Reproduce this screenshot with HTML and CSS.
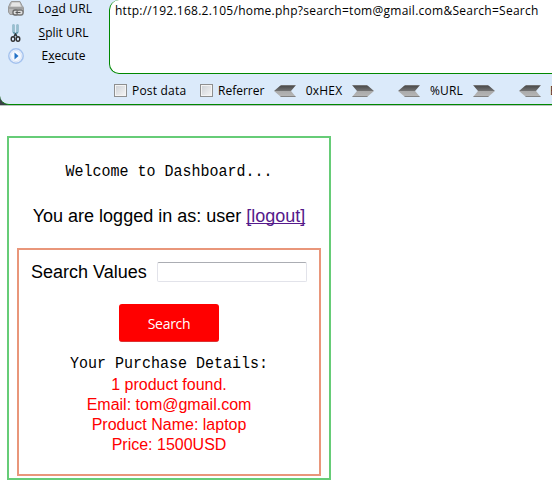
FILE: index.html
```html
<!DOCTYPE html>
<html lang="en">
<head>
<meta charset="utf-8">
<title>Dashboard</title>
<link rel="stylesheet" href="styles.css">
</head>
<body>
<svg width="0" height="0" class="defs">
  <defs>
    <linearGradient id="metal" x1="0" y1="0" x2="0" y2="1">
      <stop offset="0" stop-color="#858585"/><stop offset=".12" stop-color="#505050"/>
      <stop offset=".5" stop-color="#747474"/><stop offset=".52" stop-color="#aaa"/>
      <stop offset=".88" stop-color="#b4b4b4"/><stop offset="1" stop-color="#666"/>
    </linearGradient>
    <symbol id="left" viewBox="0 0 22 12"><path d="M0 6 7 0H22L17 6l5 6H7Z" fill="url(#metal)"/></symbol>
    <symbol id="right" viewBox="0 0 22 12"><path d="M22 6 15 0H0L5 6l-5 6h15Z" fill="url(#metal)"/></symbol>
  </defs>
</svg>
<div class="frame">
<header class="toolbar">
  <nav class="actions">
    <div class="action">
      <svg width="16" height="16" viewBox="0 0 16 16"><path d="M2.500 1.500Q3 .5 4 .5h8l2 4 1.500 2v5l-1.500 2H2L.5 11V6Z" fill="#b8b8b8" stroke="#999"/><path d="M4 1.500h7.500l1.500 4H2.500Z" fill="#e6e6e6"/><path d="M1 7h14" stroke="#888"/><rect x="5" y="9" width="5.500" height="5" rx="2" fill="#ddd" stroke="#666" stroke-width="1.300"/><rect x="9" y="9" width="6" height="5" rx="2" fill="#ddd" stroke="#777" stroke-width="1.300"/><path d="M7.500 11.500h5" stroke="#555"/></svg>
      <span class="load">Lo<u>a</u>d URL</span>
    </div>
    <div class="action">
      <svg width="16" height="19" viewBox="0 0 16 19"><path d="M5.500.5v7.500l3 4M9.500 .5v7.500l-3 4" fill="none" stroke="#6397aa" stroke-width="2"/><path d="M5.500 1v7M9.500 1v7" stroke="#a5cbd8" stroke-width=".8"/><ellipse cx="5" cy="15" rx="1.800" ry="2.300" fill="none" stroke="#333" stroke-width="1.400"/><ellipse cx="10" cy="15" rx="1.800" ry="2.300" fill="none" stroke="#333" stroke-width="1.400"/><path d="m6 12.500 1.500-2.500 1.500 2.500" fill="none" stroke="#333" stroke-width="1.400"/></svg>
      <span class="split"><u>S</u>plit URL</span>
    </div>
    <div class="action">
      <svg width="16" height="16" viewBox="0 0 16 16"><circle cx="8" cy="8" r="7.200" fill="#f4f8ff" stroke="#a4c2ee" stroke-width="1.500"/><circle cx="8" cy="8" r="5.500" fill="none" stroke="#d8e4f5"/><path d="M6.500 4.500v7L10.500 8Z" fill="#2371c6"/></svg>
      <span class="exec">E<u>x</u>ecute</span>
    </div>
  </nav>
  <div class="request">
    <div class="url"><span>http://192.168.2.105/home.php?search=tom@gmail.com&amp;Search=Search</span></div>
    <div class="options">
      <i class="check"></i><span class="post">Post data</span>
      <i class="check"></i><span class="ref">Referrer</span>
      <svg class="arrow"><use href="#left"/></svg><span class="hex">0xHEX</span><svg class="arrow"><use href="#right"/></svg>
      <svg class="arrow gap"><use href="#left"/></svg><span class="pct">%URL</span><svg class="arrow"><use href="#right"/></svg>
      <svg class="arrow gap"><use href="#left"/></svg><span class="more">B</span>
    </div>
  </div>
</header>
</div>
<main class="dashboard">
  <h1 class="mono">Welcome to Dashboard...</h1>
  <p class="login"><span>You are logged in as: user <a href="#">[logout]</a></span></p>
  <section class="search">
    <div class="field"><label for="q">Search Values</label><input id="q" type="text"></div>
    <button type="button">Search</button>
    <h2 class="mono">Your Purchase Details:</h2>
    <div class="result">1 product found.<br>Email: tom@gmail.com<br>Product Name: laptop<br>Price: 1500USD</div>
  </section>
</main>
</body>
</html>
```
FILE: styles.css
```css
* { box-sizing: border-box; }
html, body { height: 100%; }
body { margin: 0; background: #fff; overflow: hidden; color: #000; font-family: "Liberation Sans", Arial, sans-serif; }
.defs { position: absolute; }
.frame { height: 106px; background: #3b4046; border-bottom: 1px solid #b9c3bf; }
.toolbar { display: flex; height: 105px; overflow: hidden; background: #dbeafa; border-bottom: 1px solid #080; border-bottom-left-radius: 9px; font: 12px/16px "Open Sans", "Noto Sans", sans-serif; white-space: nowrap; }
.actions { width: 109px; flex: none; }
.action { display: flex; align-items: center; height: 24px; padding-left: 8px; }
.action:first-child { height: 21px; padding-bottom: 3px; }
.action:last-child { height: 22px; }
.action svg { flex: none; }
.action span { width: 79px; text-align: center; }
.action .load { width: 82px; letter-spacing: .15px; }
.action u { text-underline-offset: 2px; }
.request { flex: 1; min-width: 0; }
.url { height: 74px; background: #fff; border: solid #080; border-width: 0 0 1px 1px; border-radius: 10px 0 0 10px; padding: 3px 0 0 5px; letter-spacing: .26px; }
.options { display: flex; align-items: center; height: 33px; padding-left: 5px; overflow: hidden; }
.options > * { flex: none; }
.check { width: 13px; height: 13px; border: 1px solid #8e8f8f; background: linear-gradient(135deg, #ccd0d5, #f6f6f6); box-shadow: inset 0 0 0 1px #f4f4f4; }
.post { width: 68px; margin: 0 0 0 5px; letter-spacing: .2px; }
.ref { width: 56px; margin-left: 5px; }
.arrow { width: 22px; height: 12px; }
.hex { width: 56px; text-align: center; letter-spacing: .2px; }
.pct { width: 53px; text-align: center; letter-spacing: .2px; }
.gap { margin-left: 24px; }
.more { margin-left: 9px; color: #222; }
.dashboard { width: 324px; height: 344px; margin: 30px 0 0 7px; border: 2px solid #6c7; padding: 0 8px; text-align: center; }
.mono { margin: 0; font: 15px/20px "Liberation Mono", monospace; transform: scaleY(1.15); white-space: pre; }
h1.mono { padding-top: 25px; height: 45px; transform-origin: 50% 35px; }
.login { margin: 22px 0 0; font-size: 18px; line-height: 22px; white-space: nowrap; }
.login a { color: #551a8b; text-decoration-skip-ink: none; }
.search { width: 304px; height: 228px; margin-top: 21px; border: 2px solid #e9967a; }
.field { display: flex; align-items: center; height: 44px; padding-left: 12px; font-size: 18px; }
.field label { width: 126px; text-align: left; white-space: nowrap; }
.field input { width: 150px; height: 20px; border: 1px solid #e2e3ea; border-top-color: #abadb3; border-radius: 2px; padding: 0; }
button { display: block; width: 100px; height: 38px; margin: 10px auto 0; background: #f00; color: #fff; border: 0; border-bottom: 1px solid #d33; border-radius: 3px; font: 14px "Open Sans", sans-serif; letter-spacing: -.3px; padding: 2px 0 0; }
h2.mono { margin-top: 13px; }
.result { color: #f00; font-size: 16px; line-height: 20px; }
```
